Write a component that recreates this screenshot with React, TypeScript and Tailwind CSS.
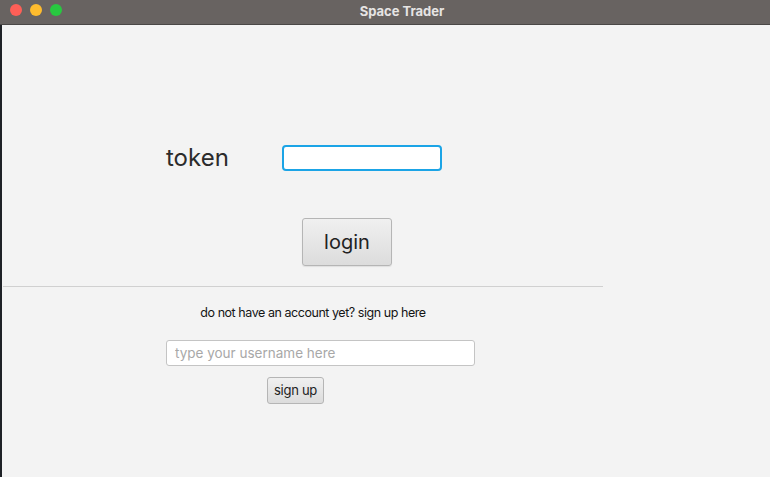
import React from 'react';

const font = { fontFamily: 'Inter, "Noto Sans", sans-serif' };

export default function App() {
  return (
    <div className="w-[770px] h-[477px] flex flex-col bg-[#1e2126] overflow-hidden" style={font}>
      {/* title bar */}
      <div className="relative h-[25px] bg-[#686361] border-b border-[#4a4746] flex items-center justify-center shrink-0">
        <div className="absolute left-[10px] top-[4px] flex gap-[8px]">
          <span className="w-[12px] h-[12px] rounded-full bg-[#fe5f57]" />
          <span className="w-[12px] h-[12px] rounded-full bg-[#febc2e]" />
          <span className="w-[12px] h-[12px] rounded-full bg-[#28c840]" />
        </div>
        <span className="text-[13px] font-bold text-[#e6e4e3] ml-[34px]">Space Trader</span>
      </div>

      <div className="flex-1 ml-[2px] bg-[#f3f3f3] flex flex-col">
        {/* token row */}
        <div className="flex items-center mt-[120px] pl-[164px]">
          <span className="w-[116px] text-[24px] text-[#2b2b2b] leading-none">token</span>
          <input
            className="w-[160px] h-[26px] bg-white border-2 border-[#1ba4e6] rounded-[4px] outline-none px-2 text-[13px]"
          />
        </div>

        <button className="mt-[47px] ml-[300px] w-[90px] h-[48px] rounded-[3px] border border-[#b5b5b5] bg-gradient-to-b from-[#f0f0f0] to-[#dcdcdc] text-[20px] text-[#222] shadow-[0_1px_1px_rgba(0,0,0,0.08)]">
          login
        </button>

        <div className="mt-[20px] ml-[1px] w-[600px] h-px bg-[#d0d0d0]" />

        <p className="mt-[18px] w-[622px] text-center text-[12.5px] tracking-[-0.45px] leading-[16px] text-[#151515]">
          do not have an account yet? sign up here
        </p>

        <input
          placeholder="type your username here"
          className="mt-[19px] ml-[164px] w-[309px] h-[26px] bg-white border border-[#c4c4c4] rounded-[3px] px-[8px] text-[13.5px] outline-none placeholder:text-[#a8a8a8]"
        />

        <button className="mt-[11px] ml-[265px] w-[57px] h-[27px] rounded-[3px] border border-[#b5b5b5] bg-gradient-to-b from-[#f0f0f0] to-[#dcdcdc] text-[13px] tracking-[-0.3px] text-[#222]">
          sign up
        </button>
      </div>
    </div>
  );
}
